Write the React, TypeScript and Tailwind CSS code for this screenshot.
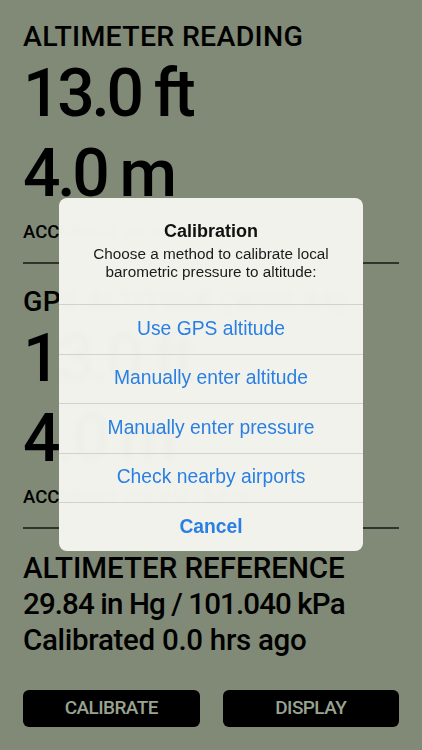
import React from 'react';

type Reading = {
  title: string;
  primary: string;
  secondary: string;
  accuracy: string;
};

const READINGS: Reading[] = [
  { title: 'ALTIMETER READING', primary: '13.0 ft', secondary: '4.0 m', accuracy: 'ACCURACY ±3.3 ft / 1.0 m' },
  { title: 'GPS ALTITUDE (WGS 84)', primary: '13.0 ft', secondary: '4.0 m', accuracy: 'ACCURACY ±16.4 ft / 5.0 m' },
];

const OPTIONS = ['Use GPS altitude', 'Manually enter altitude', 'Manually enter pressure', 'Check nearby airports'];

const ReadingBlock: React.FC<{ reading: Reading }> = ({ reading }) => (
  <div>
    <div className="text-[28.5px] leading-[34px] font-medium tracking-[0.01em]">{reading.title}</div>
    <div className="text-[66px] leading-[80px] font-medium tracking-[-0.05em]">{reading.primary}</div>
    <div className="text-[66px] leading-[80px] font-medium tracking-[-0.05em]">{reading.secondary}</div>
    <div className="text-[18.5px] leading-[37px] font-medium">{reading.accuracy}</div>
    <div className="mt-[11px] mb-[21px] h-[2px] bg-[#30342c]" />
  </div>
);

const CalibrationAlert: React.FC = () => (
  <div
    className="absolute left-[59px] top-[198px] w-[304px] rounded-[8px] overflow-hidden bg-[#f5f5f0]/[0.975] backdrop-blur-[3px] text-center"
    style={{ fontFamily: '"Liberation Sans", Arial, sans-serif' }}
  >
    <div className="pt-[22px] pb-[23px] px-2">
      <div className="text-[18px] leading-[23px] font-bold text-[#111]">Calibration</div>
      <div className="mt-[2px] text-[15.3px] leading-[18px] text-[#1a1a1a]">
        Choose a method to calibrate local
        <br />
        barometric pressure to altitude:
      </div>
    </div>
    {OPTIONS.map(option => (
      <div
        key={option}
        className="h-[49.5px] flex items-center justify-center border-t border-[#d2d2cc] text-[19.3px] text-[#2a7fe3]"
      >
        {option}
      </div>
    ))}
    <div className="h-[49px] flex items-center justify-center border-t border-[#d2d2cc] text-[19.3px] font-bold text-[#2a7fe3]">
      Cancel
    </div>
  </div>
);

const App: React.FC = () => {
  return (
    <div
      className="relative w-[422px] h-[750px] overflow-hidden bg-[#808a76] text-black px-[23px] pt-[20px]"
      style={{ fontFamily: 'Roboto, "Liberation Sans", sans-serif' }}
    >
      {READINGS.map(reading => (
        <ReadingBlock key={reading.title} reading={reading} />
      ))}

      <div className="mt-[2px] text-[29.5px] leading-[36px] font-medium">ALTIMETER REFERENCE</div>
      <div className="text-[29.5px] leading-[36px] font-medium tracking-[-0.03em]">29.84 in Hg / 101.040 kPa</div>
      <div className="text-[29.5px] leading-[36px] font-medium tracking-[-0.01em]">Calibrated 0.0 hrs ago</div>

      <div className="mt-[32px] grid grid-cols-2 gap-[23px]">
        <button className="h-[37px] rounded-[6px] bg-black text-[19px] font-medium tracking-[-0.03em] text-[#9aa390]">CALIBRATE</button>
        <button className="h-[37px] rounded-[6px] bg-black text-[19px] font-medium tracking-[-0.03em] text-[#9aa390]">DISPLAY</button>
      </div>

      <CalibrationAlert />
    </div>
  );
};

export default App;
